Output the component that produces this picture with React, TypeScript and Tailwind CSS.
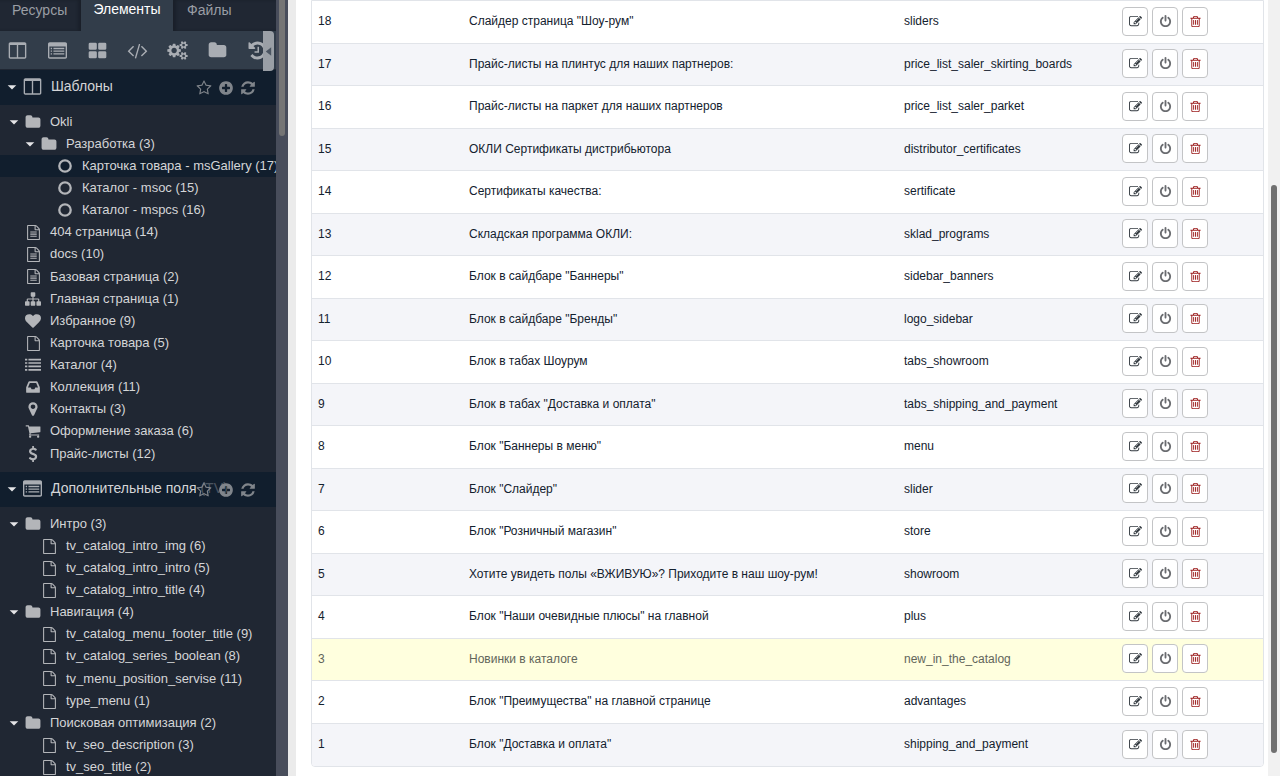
import React from 'react';

const PATHS: Record<string, string> = {
  edit: 'M888 1184l116-116-152-152-116 116v56h96v96h56zm440-720q-16-16-33 1l-350 350q-17 17-1 33t33-1l350-350q17-17 1-33zm80 594v190q0 119-84.5 203.5t-203.5 84.5h-832q-119 0-203.5-84.5t-84.5-203.5v-832q0-119 84.5-203.5t203.5-84.5h832q63 0 117 25 15 7 18 23 3 17-9 29l-49 49q-14 14-32 8-23-6-45-6h-832q-66 0-113 47t-47 113v832q0 66 47 113t113 47h832q66 0 113-47t47-113v-126q0-13 9-22l64-64q15-15 35-7t20 29zm-96-738l288 288-672 672h-288v-288zm444 132l-92 92-288-288 92-92q28-28 68-28t68 28l152 152q28 28 28 68t-28 68z',
  power: 'M1664 896q0 156-61 298t-164 245-245 164-298 61-298-61-245-164-164-245-61-298q0-182 80.5-343t226.5-270q43-32 95.5-25t83.5 50q32 42 24.5 94.5t-49.5 84.5q-98 74-151.5 181t-53.5 228q0 104 40.5 198.5t109.5 163.5 163.5 109.5 198.5 40.5 198.5-40.5 163.5-109.5 109.5-163.5 40.5-198.5q0-121-53.5-228t-151.5-181q-42-32-49.5-84.5t24.5-94.5q31-43 84-50t95 25q146 109 226.5 270t80.5 343zm-640-768v640q0 52-38 90t-90 38-90-38-38-90v-640q0-52 38-90t90-38 90 38 38 90z',
  trash: 'M704 736v576q0 14-9 23t-23 9h-64q-14 0-23-9t-9-23v-576q0-14 9-23t23-9h64q14 0 23 9t9 23zm256 0v576q0 14-9 23t-23 9h-64q-14 0-23-9t-9-23v-576q0-14 9-23t23-9h64q14 0 23 9t9 23zm256 0v576q0 14-9 23t-23 9h-64q-14 0-23-9t-9-23v-576q0-14 9-23t23-9h64q14 0 23 9t9 23zm128 724v-948h-896v948q0 22 7 40.5t14.5 27 10.5 8.5h832q3 0 10.5-8.5t14.5-27 7-40.5zm-672-1076h448l-48-117q-7-9-17-11h-317q-10 2-17 11zm928 32v64q0 14-9 23t-23 9h-96v948q0 83-47 143.5t-113 60.5h-832q-66 0-113-58.5t-47-141.5v-952h-96q-14 0-23-9t-9-23v-64q0-14 9-23t23-9h309l70-167q15-37 54-63t79-26h320q40 0 79 26t54 63l70 167h309q14 0 23 9t9 23z',
  folder: 'M1728 608v704q0 92-66 158t-158 66h-1216q-92 0-158-66t-66-158v-960q0-92 66-158t158-66h320q92 0 158 66t66 158v32h672q92 0 158 66t66 158z',
  star: 'M1201 1004l306-297-422-62-189-382-189 382-422 62 306 297-73 421 378-199 377 199zm527-357q0 22-26 48l-363 354 86 500q1 7 1 20 0 50-41 50-19 0-40-12l-449-236-449 236q-22 12-40 12-21 0-31.5-14.5t-10.5-35.5q0-6 2-20l86-500-364-354q-25-27-25-48 0-37 56-46l502-73 225-455q19-41 49-41t49 41l225 455 502 73q56 9 56 46z',
  plus: 'M1344 960v-128q0-26-19-45t-45-19h-256v-256q0-26-19-45t-45-19h-128q-26 0-45 19t-19 45v256h-256q-26 0-45 19t-19 45v128q0 26 19 45t45 19h256v256q0 26 19 45t45 19h128q26 0 45-19t19-45v-256h256q26 0 45-19t19-45zm320-64q0 209-103 385.5t-279.5 279.5-385.5 103-385.5-103-279.5-279.5-103-385.5 103-385.5 279.5-279.5 385.5-103 385.5 103 279.5 279.5 103 385.5z',
  refresh: 'M1639 1056q0 5-1 7-64 268-268 434.5t-478 166.5q-146 0-282.5-55t-243.5-157l-129 129q-19 19-45 19t-45-19-19-45v-448q0-26 19-45t45-19h448q26 0 45 19t19 45-19 45l-137 137q71 66 161 102t187 36q134 0 250-65t186-179q11-17 53-117 8-23 30-23h192q13 0 22.5 9.5t9.5 22.5zm25-800v448q0 26-19 45t-45 19h-448q-26 0-45-19t-19-45 19-45l138-138q-148-137-349-137-134 0-250 65t-186 179q-11 17-53 117-8 23-30 23h-199q-13 0-22.5-9.5t-9.5-22.5v-7q65-268 270-434.5t480-166.5q146 0 284 55.5t245 156.5l130-129q19-19 45-19t45 19 19 45z',
  columns: 'M224 1536h608v-1152h-640v1120q0 13 9.5 22.5t22.5 9.5zm1376-32v-1120h-640v1152h608q13 0 22.5-9.5t9.5-22.5zm128-1216v1216q0 66-47 113t-113 47h-1344q-66 0-113-47t-47-113v-1216q0-66 47-113t113-47h1344q66 0 113 47t47 113z',
  listAlt: 'M160 128h1472q66 0 113 47t47 113v1216q0 66-47 113t-113 47h-1472q-66 0-113-47t-47-113v-1216q0-66 47-113t113-47zM128 512v992q0 32 32 32h1472q32 0 32-32v-992zM256 640h128v128h-128zM512 640h1024v128h-1024zM256 896h128v128h-128zM512 896h1024v128h-1024zM256 1152h128v128h-128zM512 1152h1024v128h-1024z',
  thLarge: 'M192 160h512q128 0 128 128v416q0 128-128 128h-512q-128 0-128-128v-416q0-128 128-128zM1088 160h512q128 0 128 128v416q0 128-128 128h-512q-128 0-128-128v-416q0-128 128-128zM192 960h512q128 0 128 128v416q0 128-128 128h-512q-128 0-128-128v-416q0-128 128-128zM1088 960h512q128 0 128 128v416q0 128-128 128h-512q-128 0-128-128v-416q0-128 128-128z',
  code: 'M553 1399l-50 50q-10 10-23 10t-23-10l-466-466q-10-10-10-23t10-23l466-466q10-10 23-10t23 10l50 50q10 10 10 23t-10 23l-393 393 393 393q10 10 10 23t-10 23zm591-1067l-373 1291q-4 13-15.5 19.5t-23.5 2.5l-62-17q-13-4-19.5-15.5t-2.5-24.5l373-1291q4-13 15.5-19.5t23.5-2.5l62 17q13 4 19.5 15.5t2.5 24.5zm657 651l-466 466q-10 10-23 10t-23-10l-50-50q-10-10-10-23t10-23l393-393-393-393q-10-10-10-23t10-23l50-50q10-10 23-10t23 10l466 466q10 10 10 23t-10 23z',
  cogs: 'M832 896q0-106-75-181t-181-75-181 75-75 181 75 181 181 75 181-75 75-181zm768 512q0-52-38-90t-90-38-90 38-38 90q0 53 37.5 90.5t90.5 37.5 90.5-37.5 37.5-90.5zm0-1024q0-52-38-90t-90-38-90 38-38 90q0 53 37.5 90.5t90.5 37.5 90.5-37.5 37.5-90.5zm-384 421v185q0 10-7 19.5t-16 10.5l-155 24q-11 35-32 76 34 48 90 115 7 11 7 20 0 12-7 19-23 30-82.5 89.5t-78.5 59.5q-11 0-21-7l-115-90q-37 19-77 31-11 108-23 155-7 24-30 24h-186q-11 0-20-7.5t-10-17.5l-23-153q-34-10-75-31l-118 89q-7 7-20 7-11 0-21-8-144-133-144-160 0-9 7-19 10-14 41-53t47-61q-23-44-35-82l-152-24q-10-1-17-9.5t-7-19.5v-185q0-10 7-19.5t16-10.5l155-24q11-35 32-76-34-48-90-115-7-11-7-20 0-12 7-20 22-30 82-89t79-59q11 0 21 7l115 90q34-18 77-32 11-108 23-154 7-24 30-24h186q11 0 20 7.5t10 17.5l23 153q34 10 75 31l118-89q8-7 20-7 11 0 21 8 144 133 144 160 0 8-7 19-12 16-42 54t-45 60q23 48 34 82l152 23q10 2 17 10.5t7 19.5zm640 533v140q0 16-149 31-12 27-30 52 51 113 51 138 0 4-4 7-122 71-124 71-8 0-46-47t-52-68q-20 2-30 2t-30-2q-14 21-52 68t-46 47q-2 0-124-71-4-3-4-7 0-25 51-138-18-25-30-52-149-15-149-31v-140q0-16 149-31 13-29 30-52-51-113-51-138 0-4 4-7 4-2 35-20t59-34 30-16q8 0 46 46.5t52 67.5q20-2 30-2t30 2q51-71 92-112l6-2q4 0 124 70 4 3 4 7 0 25-51 138 17 23 30 52 149 15 149 31zm0-1024v140q0 16-149 31-12 27-30 52 51 113 51 138 0 4-4 7-122 71-124 71-8 0-46-47t-52-68q-20 2-30 2t-30-2q-14 21-52 68t-46 47q-2 0-124-71-4-3-4-7 0-25 51-138-18-25-30-52-149-15-149-31v-140q0-16 149-31 13-29 30-52-51-113-51-138 0-4 4-7 4-2 35-20t59-34 30-16q8 0 46 46.5t52 67.5q20-2 30-2t30 2q51-71 92-112l6-2q4 0 124 70 4 3 4 7 0 25-51 138 17 23 30 52 149 15 149 31z',
  history: 'M1664 896q0 156-61 298t-164 245-245 164-298 61q-172 0-327-72.5t-264-204.5q-7-10-6.5-22.5t8.5-20.5l137-138q10-9 25-9 16 2 23 12 73 95 179 147t225 52q104 0 198.5-40.5t163.5-109.5 109.5-163.5 40.5-198.5-40.5-198.5-109.5-163.5-163.5-109.5-198.5-40.5q-98 0-188 35.5t-160 101.5l137 138q31 30 14 69-17 40-59 40h-448q-26 0-45-19t-19-45v-448q0-42 40-59 39-17 69 14l130 129q107-101 244.5-156.5t284.5-55.5 298 61 245 164 164 245 61 298zm-640-288v448q0 14-9 23t-23 9h-320q-14 0-23-9t-9-23v-64q0-14 9-23t23-9h224v-352q0-14 9-23t23-9h64q14 0 23 9t9 23z',
  marker: 'M1152 640q0-106-75-181t-181-75-181 75-75 181 75 181 181 75 181-75 75-181zm256 0q0 109-33 179l-364 774q-16 33-47.5 52t-67.5 19-67.5-19-46.5-52l-365-774q-33-70-33-179 0-212 150-362t362-150 362 150 150 362z',
  cart: 'M704 1536q0 52-38 90t-90 38-90-38-38-90 38-90 90-38 90 38 38 90zm896 0q0 52-38 90t-90 38-90-38-38-90 38-90 90-38 90 38 38 90zm128-1088v512q0 24-16.5 42.5t-40.5 21.5l-1044 122q13 60 13 70 0 16-24 64h920q26 0 45 19t19 45-19 45-45 19h-1024q-26 0-45-19t-19-45q0-11 8-31.5t16-36 21.5-40 15.5-29.5l-177-823h-204q-26 0-45-19t-19-45 19-45 45-19h256q16 0 28.5 6.5t19.5 15.5 13 24.5 8 26 5.5 29.5 4.5 26h1201q26 0 45 19t19 45z',
  heart: 'M896 1664q-26 0-44-18l-624-602q-10-8-27.5-26t-55.5-65.5-68-97.5-53.5-121-23.5-138q0-220 127-344t351-124q62 0 126.5 21.5t120 58 95.5 68.5 76 68q36-36 76-68t95.5-68.5 120-58 126.5-21.5q224 0 351 124t127 344q0 221-229 450l-623 600q-18 18-44 18z',
  file: 'M1596 380q28 28 48 76t20 88v1152q0 40-28 68t-68 28h-1344q-40 0-68-28t-28-68v-1600q0-40 28-68t68-28h896q40 0 88 20t76 48zm-444-244v376h376q-10-29-22-41l-313-313q-12-12-41-22zm384 1528v-1024h-416q-40 0-68-28t-28-68v-416h-768v1536h1280z',
  fileText: 'M1596 380q28 28 48 76t20 88v1152q0 40-28 68t-68 28h-1344q-40 0-68-28t-28-68v-1600q0-40 28-68t68-28h896q40 0 88 20t76 48zm-444-244v376h376q-10-29-22-41l-313-313q-12-12-41-22zm384 1528v-1024h-416q-40 0-68-28t-28-68v-416h-768v1536h1280zM512 768h768v128h-768zM512 1024h768v128h-768zM512 1280h768v128h-768z',
  sitemap: 'M1792 1248v320q0 40-28 68t-68 28h-320q-40 0-68-28t-28-68v-320q0-40 28-68t68-28h96v-192h-512v192h96q40 0 68 28t28 68v320q0 40-28 68t-68 28h-320q-40 0-68-28t-28-68v-320q0-40 28-68t68-28h96v-192h-512v192h96q40 0 68 28t28 68v320q0 40-28 68t-68 28h-320q-40 0-68-28t-28-68v-320q0-40 28-68t68-28h96v-192q0-52 38-90t90-38h512v-192h-96q-40 0-68-28t-28-68v-320q0-40 28-68t68-28h320q40 0 68 28t28 68v320q0 40-28 68t-68 28h-96v192h512q52 0 90 38t38 90v192h96q40 0 68 28t28 68z',
  inbox: 'M1151 960h316q-1-3-2.5-8.5t-2.5-7.5l-212-496h-708l-212 496q-1 3-2.5 8.5t-2.5 7.5h316l95 192h320zm513 30v482q0 26-19 45t-45 19h-1408q-26 0-45-19t-19-45v-482q0-62 25-123l238-552q10-25 36.5-42t52.5-17h832q26 0 52.5 17t36.5 42l238 552q25 61 25 123z',
  dollar: 'M1362 1185q0 153-99.5 263.5t-258.5 136.5v175q0 14-9 23t-23 9h-135q-13 0-22.5-9.5t-9.5-22.5v-175q-66-9-127.5-31t-101.5-44.5-74-48-46.5-37.5-17.5-18q-17-21-2-41l103-135q7-10 23-12 15-2 24 9l2 2q113 99 243 125 37 8 74 8 81 0 142.5-43t61.5-122q0-28-15-53t-33.5-42-58.5-37.5-66-32-80-32.5q-39-16-61.5-25t-61.5-26.5-62.5-31-56.5-35.5-53.5-42.5-43.5-49-35.5-58-21-66.5-8.5-78q0-138 98-242t255-134v-180q0-13 9.5-22.5t22.5-9.5h135q14 0 23 9t9 23v176q57 6 110.5 23t87 33.5 63.5 37.5 39 29 15 14q17 18 5 38l-81 146q-8 15-23 16-14 3-27-7-3-3-14.5-12t-39-26.5-58.5-32-74.5-26-85.5-11.5q-95 0-155 43t-60 111q0 26 8.5 48t29.5 41.5 39.5 33 56 31 60.5 27 70 27.5q53 20 81 31.5t76 35 75.5 42.5 62 50 53 63.5 31.5 76.5 13 94z',
  list: 'M0 192h256v192h-256zM384 192h1408v192h-1408zM0 576h256v192h-256zM384 576h1408v192h-1408zM0 960h256v192h-256zM384 960h1408v192h-1408zM0 1344h256v192h-256zM384 1344h1408v192h-1408z',
  circle: 'M896 128a768 768 0 1 0 0 1536a768 768 0 1 0 0-1536zM896 384a512 512 0 1 1 0 1024a512 512 0 1 1 0-1024z',
  caret: 'M256 640h1280l-640 640z',
  caretLeft: 'M1216 384v1024l-640-512z',
};

const Icon = ({ name, className }: { name: string; className: string }) => (
  <svg
    viewBox="0 0 1792 1792"
    fill="currentColor"
    fillRule="evenodd"
    aria-hidden="true"
    className={`shrink-0 overflow-visible ${className}`}
  >
    <path d={PATHS[name]} />
  </svg>
);

interface TreeItem {
  label: string;
  icon: string;
  level: number;
  open?: boolean;
  selected?: boolean;
}

const templates: TreeItem[] = [
  { label: 'Okli', icon: 'folder', level: 0, open: true },
  { label: 'Разработка (3)', icon: 'folder', level: 1, open: true },
  { label: 'Карточка товара - msGallery (17)', icon: 'circle', level: 2, selected: true },
  { label: 'Каталог - msoc (15)', icon: 'circle', level: 2 },
  { label: 'Каталог - mspcs (16)', icon: 'circle', level: 2 },
  { label: '404 страница (14)', icon: 'fileText', level: 0 },
  { label: 'docs (10)', icon: 'fileText', level: 0 },
  { label: 'Базовая страница (2)', icon: 'fileText', level: 0 },
  { label: 'Главная страница (1)', icon: 'sitemap', level: 0 },
  { label: 'Избранное (9)', icon: 'heart', level: 0 },
  { label: 'Карточка товара (5)', icon: 'file', level: 0 },
  { label: 'Каталог (4)', icon: 'list', level: 0 },
  { label: 'Коллекция (11)', icon: 'inbox', level: 0 },
  { label: 'Контакты (3)', icon: 'marker', level: 0 },
  { label: 'Оформление заказа (6)', icon: 'cart', level: 0 },
  { label: 'Прайс-листы (12)', icon: 'dollar', level: 0 },
];

const fields: TreeItem[] = [
  { label: 'Интро (3)', icon: 'folder', level: 0, open: true },
  { label: 'tv_catalog_intro_img (6)', icon: 'file', level: 1 },
  { label: 'tv_catalog_intro_intro (5)', icon: 'file', level: 1 },
  { label: 'tv_catalog_intro_title (4)', icon: 'file', level: 1 },
  { label: 'Навигация (4)', icon: 'folder', level: 0, open: true },
  { label: 'tv_catalog_menu_footer_title (9)', icon: 'file', level: 1 },
  { label: 'tv_catalog_series_boolean (8)', icon: 'file', level: 1 },
  { label: 'tv_menu_position_servise (11)', icon: 'file', level: 1 },
  { label: 'type_menu (1)', icon: 'file', level: 1 },
  { label: 'Поисковая оптимизация (2)', icon: 'folder', level: 0, open: true },
  { label: 'tv_seo_description (3)', icon: 'file', level: 1 },
  { label: 'tv_seo_title (2)', icon: 'file', level: 1 },
];

interface Config {
  id: number;
  title: string;
  key: string;
  disabled?: boolean;
}

const configs: Config[] = [
  { id: 18, title: 'Слайдер страница "Шоу-рум"', key: 'sliders' },
  { id: 17, title: 'Прайс-листы на плинтус для наших партнеров:', key: 'price_list_saler_skirting_boards' },
  { id: 16, title: 'Прайс-листы на паркет для наших партнеров', key: 'price_list_saler_parket' },
  { id: 15, title: 'ОКЛИ Сертификаты дистрибьютора', key: 'distributor_certificates' },
  { id: 14, title: 'Сертификаты качества:', key: 'sertificate' },
  { id: 13, title: 'Складская программа ОКЛИ:', key: 'sklad_programs' },
  { id: 12, title: 'Блок в сайдбаре "Баннеры"', key: 'sidebar_banners' },
  { id: 11, title: 'Блок в сайдбаре "Бренды"', key: 'logo_sidebar' },
  { id: 10, title: 'Блок в табах Шоурум', key: 'tabs_showroom' },
  { id: 9, title: 'Блок в табах "Доставка и оплата"', key: 'tabs_shipping_and_payment' },
  { id: 8, title: 'Блок "Баннеры в меню"', key: 'menu' },
  { id: 7, title: 'Блок "Слайдер"', key: 'slider' },
  { id: 6, title: 'Блок "Розничный магазин"', key: 'store' },
  { id: 5, title: 'Хотите увидеть полы «ВЖИВУЮ»? Приходите в наш шоу-рум!', key: 'showroom' },
  { id: 4, title: 'Блок "Наши очевидные плюсы" на главной', key: 'plus' },
  { id: 3, title: 'Новинки в каталоге', key: 'new_in_the_catalog', disabled: true },
  { id: 2, title: 'Блок "Преимущества" на главной странице', key: 'advantages' },
  { id: 1, title: 'Блок "Доставка и оплата"', key: 'shipping_and_payment' },
];

const toolbar = [
  { name: 'columns', label: 'Новый шаблон' },
  { name: 'listAlt', label: 'Новое поле' },
  { name: 'thLarge', label: 'Новый чанк' },
  { name: 'code', label: 'Новый сниппет' },
  { name: 'cogs', label: 'Новый плагин' },
  { name: 'folder', label: 'Новая категория' },
  { name: 'history', label: 'История' },
];

const indents = ['pl-2', 'pl-6', 'pl-10'];

const Tree = ({ items }: { items: TreeItem[] }) => (
  <ul className="pt-[6px] pb-[7px]">
    {items.map((item) => (
      <li
        key={item.label}
        className={`flex h-[22px] items-center overflow-hidden whitespace-nowrap text-[13px] text-[#d4d5d7] nth-[8n]:h-[23px] ${indents[item.level]} ${item.selected ? 'bg-[#111e2d]' : ''}`}
      >
        <span className="w-4 shrink-0">
          {item.open && <Icon name="caret" className="h-3 w-3 text-[#e4e5e7]" />}
        </span>
        <span className="mr-2 flex w-[18px] shrink-0 justify-center text-[#b3b5b9]">
          <Icon name={item.icon} className={item.icon.startsWith('file') ? 'h-[15px] w-[15px]' : 'h-4 w-4'} />
        </span>
        <a href="#">{item.label}</a>
      </li>
    ))}
  </ul>
);

const SectionHeader = ({ title, icon }: { title: string; icon: string }) => (
  <div className="relative flex h-[35px] items-center overflow-hidden whitespace-nowrap bg-[#111e2d] pb-[2px] pl-[6px]">
    <Icon name="caret" className="h-3 w-3 text-[#e4e5e7]" />
    <Icon name={icon} className="mr-[9px] ml-[5px] h-[19px] w-[19px] text-[#a9adb3]" />
    <h2 className="text-[14px] text-[#d4d5d7]">{title}</h2>
    <div className="absolute inset-y-0 right-0 flex w-20 items-center gap-[6px] bg-[#111e2d]/70 text-[#80858b]">
      <button aria-label="Быстро создать">
        <Icon name="star" className="h-4 w-4" />
      </button>
      <button aria-label="Добавить">
        <Icon name="plus" className="h-4 w-4" />
      </button>
      <button aria-label="Обновить">
        <Icon name="refresh" className="h-4 w-4" />
      </button>
    </div>
  </div>
);

const Sidebar = () => (
  <aside className="flex w-72 shrink-0 bg-[#484d5b]">
    <div className="relative w-[276px] overflow-hidden bg-[#202733]">
      <nav className="flex h-[31px] text-[14px] text-[#9a9ea5]">
        <a href="#" className="w-[81px] pl-3 leading-5 shadow-[inset_-3px_0_3px_#1a202a]">Ресурсы</a>
        <a href="#" className="w-[92px] bg-[#323d4a] text-center leading-[18px] text-white">Элементы</a>
        <a href="#" className="flex-1 pl-[14px] leading-5 shadow-[inset_3px_0_3px_#1a202a]">Файлы</a>
      </nav>
      <div className="flex h-[38px] items-center bg-[#323d4a] text-[#a9adb3]">
        {toolbar.map(({ name, label }) => (
          <button key={name} aria-label={label} className="flex w-10 shrink-0 justify-center pr-[5px]">
            <Icon name={name} className={name === 'history' ? 'h-[21px] w-[21px]' : 'h-[19px] w-[19px]'} />
          </button>
        ))}
      </div>
      <button
        aria-label="Свернуть панель"
        className="absolute top-[31px] right-[2px] z-10 flex h-10 w-[11px] items-center justify-center rounded-r bg-[#9a9fa6] text-[#4b5562]"
      >
        <Icon name="caretLeft" className="h-[15px] w-[15px]" />
      </button>
      <div className="mt-px">
        <SectionHeader title="Шаблоны" icon="columns" />
        <Tree items={templates} />
        <SectionHeader title="Дополнительные поля (TV)" icon="listAlt" />
        <Tree items={fields} />
      </div>
    </div>
    <div className="flex flex-1 justify-center">
      <div className="h-[136px] w-[6px] rounded-b-full bg-[#757575]" />
    </div>
  </aside>
);

const actions = [
  { name: 'edit', label: 'Редактировать', color: 'text-[#333a40]' },
  { name: 'power', label: 'Выключить', color: 'text-[#6a6c70]' },
  { name: 'trash', label: 'Удалить', color: 'text-[#9c1c1c]' },
];

const cell = 'border-b border-[#e1e4e9] pb-[2px] pl-[6px] group-last:border-b-0';

export default function App() {
  return (
    <div className="flex h-screen overflow-hidden bg-white font-['Liberation_Sans',Arial,sans-serif]">
      <Sidebar />
      <div className="w-2 shrink-0 bg-[#ebebeb]" />
      <main className="min-w-0 flex-1 pr-1 pl-[15px]">
        <div className="overflow-hidden rounded-b border border-[#e1e4e9]">
          <table className="w-full table-fixed border-separate border-spacing-0 text-left text-[12px] text-[#13212e]">
            <colgroup>
              <col className="w-[151px]" />
              <col />
              <col className="w-[218px]" />
              <col className="w-[147px]" />
            </colgroup>
            <tbody>
              {configs.map((row) => (
                <tr
                  key={row.id}
                  className={`group odd:h-[43px] even:h-[42px] ${
                    row.disabled ? 'bg-[#ffffde] text-[#62655a]' : 'even:bg-[#f4f5f9]'
                  }`}
                >
                  <td className={cell}>{row.id}</td>
                  <td className={cell}>{row.title}</td>
                  <td className={cell}>{row.key}</td>
                  <td className={cell}>
                    <div className="flex gap-1">
                      {actions.map(({ name, label, color }) => (
                        <button
                          key={name}
                          aria-label={label}
                          className={`flex h-[29px] w-[26px] items-center justify-center rounded border border-[#c3c4c6] bg-white ${color}`}
                        >
                          <Icon name={name} className="h-[13px] w-[13px]" />
                        </button>
                      ))}
                    </div>
                  </td>
                </tr>
              ))}
            </tbody>
          </table>
        </div>
      </main>
      <div className="flex w-3 shrink-0 flex-col items-center bg-[#f1f1f1] pt-[185px]">
        <div className="h-[568px] w-[6px] shrink-0 rounded-full bg-[#707070]" />
      </div>
    </div>
  );
}
